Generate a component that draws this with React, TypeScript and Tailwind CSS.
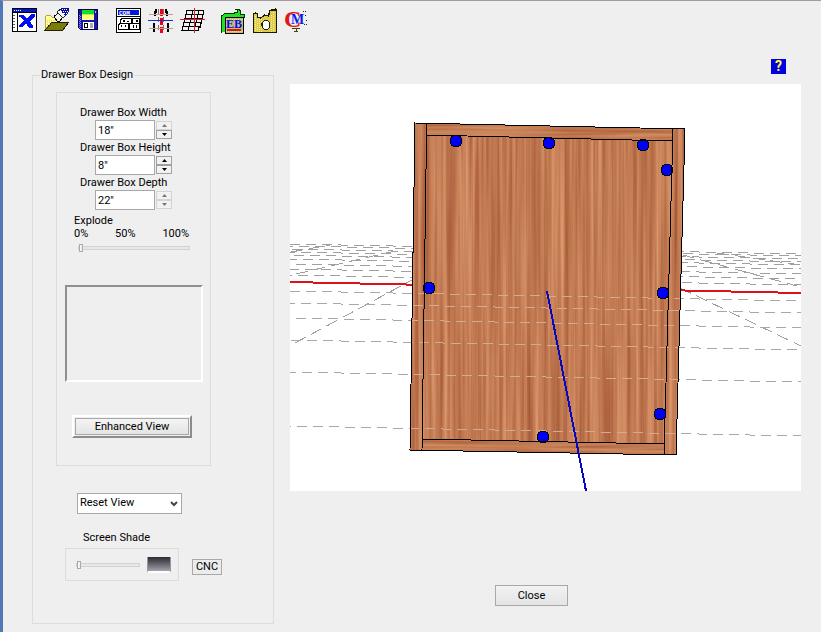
import React, { useState } from 'react';

interface IconProps {
  children: React.ReactNode;
  label: string;
}

const ToolButton: React.FC<IconProps> = ({ children, label }) => (
  <button type="button" aria-label={label} title={label} className="block size-[26px]">
    <svg viewBox="0 0 26 26" className="size-full overflow-visible" shapeRendering="crispEdges">
      {children}
    </svg>
  </button>
);

const CloseWindowIcon = () => (
  <>
    <rect x="0.5" y="0.5" width="24" height="23" fill="#fff" stroke="#000" />
    <rect x="1" y="1" width="23" height="3" fill="#0018c8" />
    <path d="M2 2.5h7" stroke="#fff" strokeDasharray="1 1" />
    <path d="M1 4.5h23M5.5 5v18" stroke="#000" />
    <path d="M1 7.5h3M1 10.5h3M1 13.5h3M1 16.5h3M1 19.5h3" stroke="#555" strokeDasharray="2 1" />
    <path d="M7 7h5l3 4 4-5h4v2l-5 5 3 5v2h-4l-3-5-3 4H7v-2l5-4-3-4H7z" fill="#0010f0" />
  </>
);

const OpenFolderIcon = () => (
  <>
    <path d="M1 22V9l2-2h3l2 2h5v5H8z" fill="#ffff9c" stroke="#b5a642" />
    <path d="M7.5 14.5h17l-6 8H1z" fill="#7b7b10" stroke="#222200" />
    <path d="M10 8l3 5h3l3-4-4-4z" fill="#f0f0f0" stroke="#000" />
    <path d="M13 4l4-3h4l3 4-5 5z" fill="#f4f4ff" stroke="#222" />
    <path d="M17 0h8v4h-2v3h-3V5h-2V3h-1z" fill="#00109c" />
    <path d="M18 1.5h6M19 3.5h5M20 5.5h3" stroke="#fff" strokeDasharray="1 1" />
    <path d="M3 12.5h9M3 14.5h4M3 16.5h3" stroke="#e8c860" strokeDasharray="1 1" />
  </>
);

const SaveIcon = () => (
  <>
    <path d="M2.5 1.5h19v20h-17l-2-2z" fill="#1818a8" stroke="#000050" />
    <rect x="6" y="2" width="12" height="10" fill="#ffff80" />
    <rect x="6" y="2" width="12" height="4" fill="#10e030" />
    <path d="M6 6.5h12" stroke="#b8f040" />
    <path d="M19.5 3v2" stroke="#c0c0ff" />
    <rect x="7" y="14" width="11" height="7" fill="#fff" />
    <rect x="8.5" y="15.500" width="3" height="4" fill="#fff" stroke="#000" />
    <rect x="14" y="15" width="3" height="5" fill="#aaa" />
    <path d="M3.5 7v13M4.5 8v13" stroke="#8888ee" strokeDasharray="1 1" />
  </>
);

const DialogIcon = () => (
  <>
    <rect x="0.5" y="0.5" width="24" height="24" fill="#fff" stroke="#000" />
    <rect x="2" y="2" width="21" height="5" fill="#0018d8" />
    <text x="3" y="7" fontSize="6" fontWeight="700" fill="#fff" fontFamily="Liberation Mono, monospace">COM</text>
    <path d="M1 8.5h23" stroke="#000" />
    <path d="M4.5 15v-3l2-2h9v5M16.500 15v-5h7v5M2.500 21v-4l2-2h8v6M13.500 21v-6h10v6M2 21.500h22" fill="#fff" stroke="#000" />
    <path d="M9 12l-2 1 2 1M11 13h2M20 12l2 1-2 1M6 17l-1 1 1 1M9 17v2M17.500 17v3M21 17l-1 3" fill="none" stroke="#000" />
  </>
);

const PlanIcon = () => (
  <>
    <path d="M8 1v3H7v4M6 15v9M18 1v3h1v4M20 15v9" fill="none" stroke="#000" strokeWidth="2" />
    <path d="M10.500 1v24M15.500 1v24" stroke="#8c6a66" strokeDasharray="5 3" />
    <path d="M13 1v24" stroke="#f00018" strokeWidth="3" strokeDasharray="7 2" />
    <path d="M1 6.500h24M1 20.500h24" stroke="#c0a090" />
    <path d="M0 12.500h25" stroke="#1830c8" />
  </>
);

const GridIcon = () => (
  <>
    <path d="M6 2.5h18M5 6.5h19M4 10.5h19M3 14.5h19M2 18.5h18M1 22.5h17" stroke="#000" />
    <path d="M6.5 2v4h-1v4h-1v4h-1v4h-1v5M12.500 2v4h-1v4h-1v4h-1v4h-1v5M18.500 2v4h-1v4h-1v4h-1v4h-1v5M23.500 2v4h-1v5h-1v4h-1v4h-2v4" fill="none" stroke="#000" />
    <path d="M0 11.5h25M14.5 0v25" stroke="#e01830" />
  </>
);

const EasyBookIcon = () => (
  <>
    <path d="M1.5 25V8l4-3h9l3-1V2l-2-1h3l2 2v3l4 1v3" fill="#20e028" stroke="#003800" />
    <path d="M5.5 25V9h18v16z" fill="#c8ba70" stroke="#000" />
    <path d="M3.5 9v15" stroke="#20e028" strokeWidth="3" />
    <path d="M6 23.5h17M6 11.500h17" stroke="#e8dfa8" strokeDasharray="1 1" />
    <text x="6" y="20" fontSize="12" fontWeight="700" fill="#0010e8" fontFamily="Liberation Serif, serif">EB</text>
    <path d="M7 22h14" stroke="#d01818" strokeWidth="2" />
  </>
);

const PanelIcon = () => (
  <>
    <path d="M1.5 24.5V6l2-1 2 1v3l3 1 4-3 4 1 1-5 3-2h4v23.500z" fill="#dccb48" stroke="#1a1a00" />
    <path d="M3.500 8v16M5.500 11v13M7.500 11v13M9.500 11v13M19.500 7v17M21.500 4v20" stroke="#f8f0a0" strokeDasharray="1 1" />
    <path d="M1 5h4v4l4 1 4-3h4l1-5h5V0" fill="none" stroke="#1a1a00" />
    <ellipse cx="14" cy="17" rx="4" ry="5" fill="#fff" stroke="#222200" />
    <path d="M10.500 14l-1 3 2 4" fill="none" stroke="#222200" />
  </>
);

const CabinetMakerIcon = () => (
  <>
    <text x="0" y="19" fontSize="24" fontWeight="700" fill="#e01818" fontFamily="Liberation Serif, serif">C</text>
    <text x="7" y="16" fontSize="14" fontWeight="700" fill="#0820e8" fontFamily="Liberation Serif, serif">M</text>
    <path d="M19 3h3M21 7h2M22 12h2M20 16h3" stroke="#222" strokeDasharray="1 1" />
    <path d="M8 20.500h8M12.500 20v4M10 23.500h4" stroke="#444010" />
  </>
);

interface SpinFieldProps {
  id: string;
  label: string;
  value: string;
  upDisabled?: boolean;
  downDisabled?: boolean;
}

const spinClass =
  'flex h-[9px] w-4 items-center justify-center border border-[#a0a0a0] bg-[#f2f2f2] text-black disabled:border-[#d4d4d4] disabled:text-[#777]';

const SpinField: React.FC<SpinFieldProps> = ({ id, label, value, upDisabled, downDisabled }) => (
  <div>
    <label htmlFor={id} className="block h-[15px] pl-[23px] leading-[15px]">{label}</label>
    <div className="flex h-5 items-center gap-px pl-[38px]">
      <input
        id={id}
        type="text"
        defaultValue={value}
        className="h-5 w-[60px] border border-[#a8a8a8] bg-white px-0.5 outline-none"
      />
      <div className="flex flex-col">
        <button type="button" aria-label={`Increase ${label}`} disabled={upDisabled} className={spinClass}>
          <svg viewBox="0 0 5 3" className="h-[3px] w-[5px]"><path d="M0 3h5L2.500 0z" fill="currentColor" /></svg>
        </button>
        <button type="button" aria-label={`Decrease ${label}`} disabled={downDisabled} className={spinClass}>
          <svg viewBox="0 0 5 3" className="h-[3px] w-[5px]"><path d="M0 0h5L2.500 3z" fill="currentColor" /></svg>
        </button>
      </div>
    </div>
  </div>
);

const sliderClass =
  'block h-4 appearance-none bg-transparent outline-none [&::-webkit-slider-runnable-track]:h-1 [&::-webkit-slider-runnable-track]:border [&::-webkit-slider-runnable-track]:border-[#d2d2d2] [&::-webkit-slider-runnable-track]:bg-[#e8e8e8] [&::-webkit-slider-thumb]:-mt-[3px] [&::-webkit-slider-thumb]:h-2 [&::-webkit-slider-thumb]:w-1 [&::-webkit-slider-thumb]:appearance-none [&::-webkit-slider-thumb]:border [&::-webkit-slider-thumb]:border-[#aaa] [&::-webkit-slider-thumb]:bg-[#f4f4f4]';

// Far grid lines bunch up towards the horizon, near ones spread out.
const farLines = [160, 162, 165, 168, 171, 175, 180, 185, 191];
const nearLines = [207, 219, 234, 256, 288, 342];

const handles = [
  [166, 57], [259, 59], [353, 61], [377, 86],
  [373, 209], [370, 330], [253, 353], [139, 204],
];

const DrawerScene = () => (
  <svg viewBox="0 0 511 407" className="block h-auto w-full bg-white" role="img" aria-label="Drawer box preview">
    <defs>
      <filter id="grain" x="0" y="0" width="1" height="1" colorInterpolationFilters="sRGB">
        <feTurbulence type="fractalNoise" baseFrequency="0.24 0.004" numOctaves="3" seed="12" />
        <feColorMatrix values="0.3 0 0 0 0.61  0.34 0 0 0 0.31  0.3 0 0 0 0.175  0 0 0 0 1" />
      </filter>
      <filter id="grainFlat" x="0" y="0" width="1" height="1" colorInterpolationFilters="sRGB">
        <feTurbulence type="fractalNoise" baseFrequency="0.008 0.3" numOctaves="3" seed="3" />
        <feColorMatrix values="0.26 0 0 0 0.63  0.3 0 0 0 0.33  0.26 0 0 0 0.19  0 0 0 0 1" />
      </filter>
      <clipPath id="box"><path d="M125 39L395 45L386 371L120 366z" /></clipPath>
      <clipPath id="rails"><path d="M137 39L383 45V57L136 51zM132 355L375 360L374 371L131 366z" /></clipPath>
    </defs>

    <g stroke="#a0a0a0" fill="none" shapeRendering="crispEdges">
      {farLines.map((y, i) => (
        <path key={y} d={`M0 ${y}L511 ${y + 10}`} strokeDasharray="10 6" strokeDashoffset={i * 7} />
      ))}
      <path d="M5 259L122 196M1 168L40 161M6 190L105 167M390 204L511 262M393 171L507 202M427 169L511 181" strokeDasharray="12 6" />
    </g>
    <path d="M0 198L511 209" stroke="#d81418" strokeWidth="2" shapeRendering="crispEdges" />

    <g clipPath="url(#box)">
      <rect x="118" y="38" width="280" height="335" filter="url(#grain)" />
    </g>
    <g clipPath="url(#rails)">
      <rect x="118" y="38" width="280" height="335" filter="url(#grainFlat)" />
    </g>

    {nearLines.map((y, i) => (
      <g key={y} fill="none" strokeDasharray="10 6" strokeDashoffset={i * 5} shapeRendering="crispEdges">
        <path d={`M0 ${y}L511 ${y + 10}`} stroke="#a8a8a8" />
        <path d={`M0 ${y}L511 ${y + 10}`} stroke="#d2ab92" clipPath="url(#box)" />
      </g>
    ))}

    <g fill="none" stroke="#000" shapeRendering="crispEdges">
      {handles.map(([cx, cy]) => (
        <circle key={`${cx}-${cy}`} cx={cx} cy={cy} r="6" fill="#0000f4" />
      ))}
      <path d="M125 39L395 45L386 371L120 366z" />
      <path d="M136.500 39.500V51L132 366M136 51L383 57M383 45L374 371M132 355L374 360" />
    </g>
    <path d="M257 207L296 407" stroke="#0808c0" strokeWidth="2" shapeRendering="crispEdges" />
  </svg>
);

const App: React.FC = () => {
  const [explode, setExplode] = useState(0);
  const [shade, setShade] = useState(0);

  return (
    <div className="min-h-screen border-t border-l-[3px] border-t-[#a09ca2] border-l-[#5078b4] bg-[#efefef] font-['Roboto','Liberation_Sans',sans-serif] text-[11px] text-black">
      <nav aria-label="Toolbar" className="flex gap-[14px] pt-[7px] pl-[9px]">
        <div className="flex gap-1.5">
          <ToolButton label="Exit"><CloseWindowIcon /></ToolButton>
          <ToolButton label="Open"><OpenFolderIcon /></ToolButton>
          <ToolButton label="Save"><SaveIcon /></ToolButton>
        </div>
        <div className="flex gap-1.5">
          <ToolButton label="Commands"><DialogIcon /></ToolButton>
          <ToolButton label="Plan"><PlanIcon /></ToolButton>
          <ToolButton label="Grid"><GridIcon /></ToolButton>
        </div>
        <div className="flex gap-1.5">
          <ToolButton label="Easy book"><EasyBookIcon /></ToolButton>
          <ToolButton label="Panels"><PanelIcon /></ToolButton>
          <ToolButton label="Cabinet maker"><CabinetMakerIcon /></ToolButton>
        </div>
      </nav>

      <main className="flex items-start gap-4 pt-[25px] pr-5 pl-[29px]">
        <fieldset className="mt-[9px] w-[242px] shrink-0 border border-[#dcdcdc] pb-[42px]">
          <legend className="ml-[7px] h-[14px] px-px leading-[14px]">Drawer Box Design</legend>

          <div className="mt-[10px] ml-[23px] w-[155px] border border-[#dcdcdc] pt-3 pb-[27px]">
            <SpinField id="width" label="Drawer Box Width" value={'18"'} upDisabled />
            <SpinField id="height" label="Drawer Box Height" value={'8"'} />
            <SpinField id="depth" label="Drawer Box Depth" value={'22"'} upDisabled downDisabled />

            <div className="mt-1 pl-[17px] leading-[13px]">
              <label htmlFor="explode" className="block">Explode</label>
              <div className="flex w-[115px] justify-between">
                <span>0%</span>
                <span>50%</span>
                <span>100%</span>
              </div>
              <input
                id="explode"
                type="range"
                min={0}
                max={100}
                value={explode}
                onChange={e => setExplode(Number(e.target.value))}
                className={`ml-1 w-[112px] ${sliderClass}`}
              />
            </div>

            <div className="mt-[29px] ml-2 h-[97px] w-[138px] border-2 border-t-[#909090] border-r-white border-b-white border-l-[#909090]" />

            <button
              type="button"
              className="mt-[33px] ml-[15px] block h-[23px] w-[120px] border-2 border-t-white border-r-[#8c8c8c] border-b-[#8c8c8c] border-l-white p-px"
            >
              <span className="block h-[17px] border border-[#a8a8a8] bg-linear-to-b from-[#f4f4f4] to-[#e4e4e4] leading-[15px]">
                Enhanced View
              </span>
            </button>
          </div>

          <div className="relative mt-[27px] ml-11 w-[105px]">
            <select
              aria-label="View"
              className="block h-[21px] w-full appearance-none border border-[#a8a8a8] bg-white pl-0.5 outline-none"
            >
              <option>Reset View</option>
            </select>
            <svg viewBox="0 0 8 6" className="pointer-events-none absolute top-2 right-1 h-1.5 w-2">
              <path d="M1 1l3 3 3-3" fill="none" stroke="#444" strokeWidth="2" />
            </svg>
          </div>

          <label htmlFor="shade" className="mt-[17px] block pl-[50px] leading-[14px]">Screen Shade</label>
          <div className="mt-[3px] ml-8 flex items-center gap-[13px]">
            <div className="flex h-[33px] w-[114px] items-center justify-between border border-[#dcdcdc] pr-[7px] pl-[10px]">
              <input
                id="shade"
                type="range"
                min={0}
                max={100}
                value={shade}
                onChange={e => setShade(Number(e.target.value))}
                className={`w-16 ${sliderClass}`}
              />
              <div className="h-4 w-6 border-x border-b-2 border-x-[#999] border-b-white bg-linear-to-b from-[#2c2c34] to-[#a4a4ae]" />
            </div>
            <button type="button" className="mt-1 h-4 w-[30px] border border-[#a8a8a8] bg-[#ececec] leading-[14px]">
              CNC
            </button>
          </div>
        </fieldset>

        <section className="flex min-w-0 flex-1 flex-col">
          <button
            type="button"
            aria-label="Help"
            className="mr-[15px] h-[15px] w-[15px] self-end bg-[#0000e0] text-[14px] leading-[15px] font-bold text-[#ffff40]"
          >
            ?
          </button>
          <div className="mt-[10px]">
            <DrawerScene />
          </div>
          <button
            type="button"
            className="mt-[94px] mr-7 h-[21px] w-[73px] self-center border border-[#a8a8a8] bg-linear-to-b from-[#f2f2f2] to-[#e4e4e4] leading-[19px]"
          >
            Close
          </button>
        </section>
      </main>
    </div>
  );
};

export default App;
